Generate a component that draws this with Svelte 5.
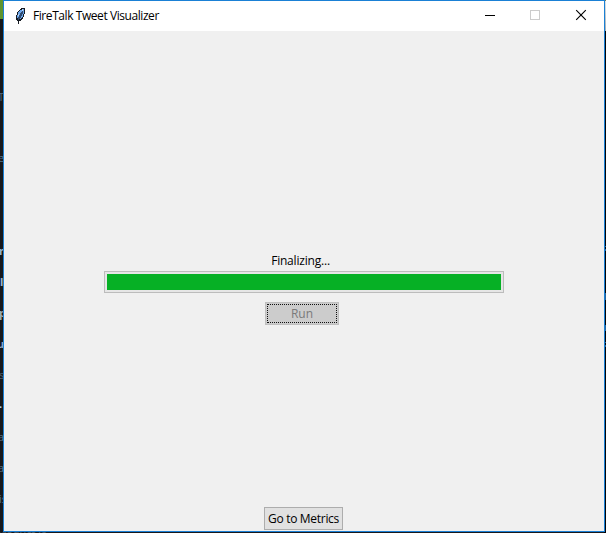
<script>
  const fragments = [
    { y: 97, text: 'T', color: '#53687a', x: -2 },
    { y: 158, text: 'e', color: '#54758c', x: -2 },
    { y: 251, text: 'n', color: '#9bb4cf', bold: true, x: -1 },
    { y: 282, text: 'l', color: '#9bb4cf', bold: true, x: 0 },
    { y: 313, text: 'p', color: '#a3aeb5', bold: true, x: -1 },
    { y: 344, text: 'u', color: '#8ea5c0', bold: true, x: -3 },
    { y: 375, text: 's', color: '#52636e', x: -1 },
    { y: 404, text: '.', color: '#b8d8f8', bold: true, x: -1 },
    { y: 437, text: 'a', color: '#5b7384', x: -2 },
    { y: 468, text: 'a', color: '#5b7384', x: -2 },
    { y: 499, text: 'is', color: '#5b7384', x: -1 },
    { y: 534, text: 'product is', color: '#4f5b63', x: -5 }
  ];
  const glints = [
    { y: 246, h: 1 }, { y: 249, h: 2 }, { y: 293, h: 7 },
    { y: 325, h: 6 }, { y: 342, h: 1 }, { y: 345, h: 2 }
  ];
</script>

<div class="desktop">
  <div class="green"></div>
  <div class="light"></div>
  {#each fragments as f}
    <span class="fragment" class:bold={f.bold} style="top:{f.y - 8}px;left:{f.x}px;color:{f.color}">{f.text}</span>
  {/each}
  {#each glints as g}
    <i class="glint" style="top:{g.y}px;height:{g.h}px"></i>
  {/each}

  <main class="window">
    <header>
      <svg class="feather" width="16" height="18" viewBox="0 0 16 18" shape-rendering="crispEdges">
        <path d="M9 1h4v6h-1v3h-1v2h-1v1H9v1H7v3H6v-3H5v-1H4V8h1V5h1V4h1V3h1V2h1z" fill="#161b22" />
        <path d="M10 2h2v5h-1v3h-1v1H9v1H6v-1H5V8h1V5h1V4h1V3h2z" fill="#6ba4e8" />
        <path d="M10 4h1v3h-1v2H9v2H8v1H7v1H6v-3h1V8h1V6h1V5h1z" fill="#2f4a70" />
        <path d="M10 2h1v2h-1zM6 7h1v2H6z" fill="#b8d4f2" />
      </svg>
      <span class="title">FireTalk Tweet Visualizer</span>
      <div class="controls">
        <svg width="46" height="30" shape-rendering="crispEdges"><path d="M19 14h10v1H19z" fill="#000" /></svg>
        <svg width="46" height="30" shape-rendering="crispEdges"><rect x="18.5" y="9.5" width="9" height="9" fill="none" stroke="#ccc" /></svg>
        <svg width="46" height="30"><path d="M18.2 9.2l9.6 9.6M27.8 9.2l-9.6 9.6" fill="none" stroke="#000" stroke-width="1.15" /></svg>
      </div>
    </header>
    <section class="client">
      <div class="status"><span>Finalizing...</span></div>
      <div class="progress"><div class="fill"></div></div>
      <button class="run" disabled><span>Run</span></button>
      <button class="metrics"><span>Go to Metrics</span></button>
    </section>
  </main>
</div>

<style>
  :global(body) { margin: 0; }
  .desktop {
    position: relative;
    box-sizing: border-box;
    width: 606px;
    height: 533px;
    padding-left: 3px;
    overflow: hidden;
    background: linear-gradient(90deg, #16181c 0 604px, #02050b 604px);
    font-family: "Open Sans", "Noto Sans", sans-serif;
    font-size: 12px;
  }
  .green { position: absolute; left: 0; top: 0; width: 3px; height: 19px; background: #5f942c; }
  .light { position: absolute; right: 0; top: 0; width: 1px; height: 31px; background: linear-gradient(#77804f 0 1px, #e1e4e6 1px, #a5adb3); }
  .fragment { position: absolute; line-height: 16px; font-size: 11px; white-space: nowrap; }
  .bold { font-weight: 700; }
  .glint { position: absolute; right: 0; width: 1px; background: #24639b; }
  .window {
    position: relative;
    box-sizing: border-box;
    width: 602px;
    height: 532px;
    border: 1px solid #1a80d5;
    display: flex;
    flex-direction: column;
    background: #f0f0f0;
  }
  header { height: 30px; flex: none; display: flex; align-items: center; background: #fff; }
  .feather { margin: -1px 0 0 8px; }
  .title { margin-left: 5px; line-height: 16px; letter-spacing: -0.43px; white-space: nowrap; color: #000; }
  .controls { margin-left: auto; display: flex; width: 138px; }
  .controls svg { display: block; flex: none; }
  .client { flex: 1; display: flex; flex-direction: column; align-items: center; }
  .status { margin-top: 221px; height: 19px; line-height: 18px; letter-spacing: -0.2px; width: 100%; text-align: center; text-indent: -7px; }
  .progress { box-sizing: border-box; width: 400px; height: 22px; border: 1px solid #bcbcbc; background: #e6e6e6; padding: 2px; }
  .fill { width: 394px; height: 16px; background: #06b025; }
  button { box-sizing: border-box; height: 23px; flex: none; padding: 0; font: inherit; line-height: 17px; border: 1px solid #adadad; background: #e1e1e1; color: #000; border-radius: 0; white-space: nowrap; }
  .run { width: 74px; margin: 9px 4px 0 0; padding: 1px; border-color: #bfbfbf; background: #ccc; color: #7a7a7a; }
  .run span { display: block; box-sizing: border-box; height: 19px; border: 1px dotted #111; }
  .metrics { width: 79px; margin: auto 1px 1px 0; letter-spacing: -0.3px; }
</style>
